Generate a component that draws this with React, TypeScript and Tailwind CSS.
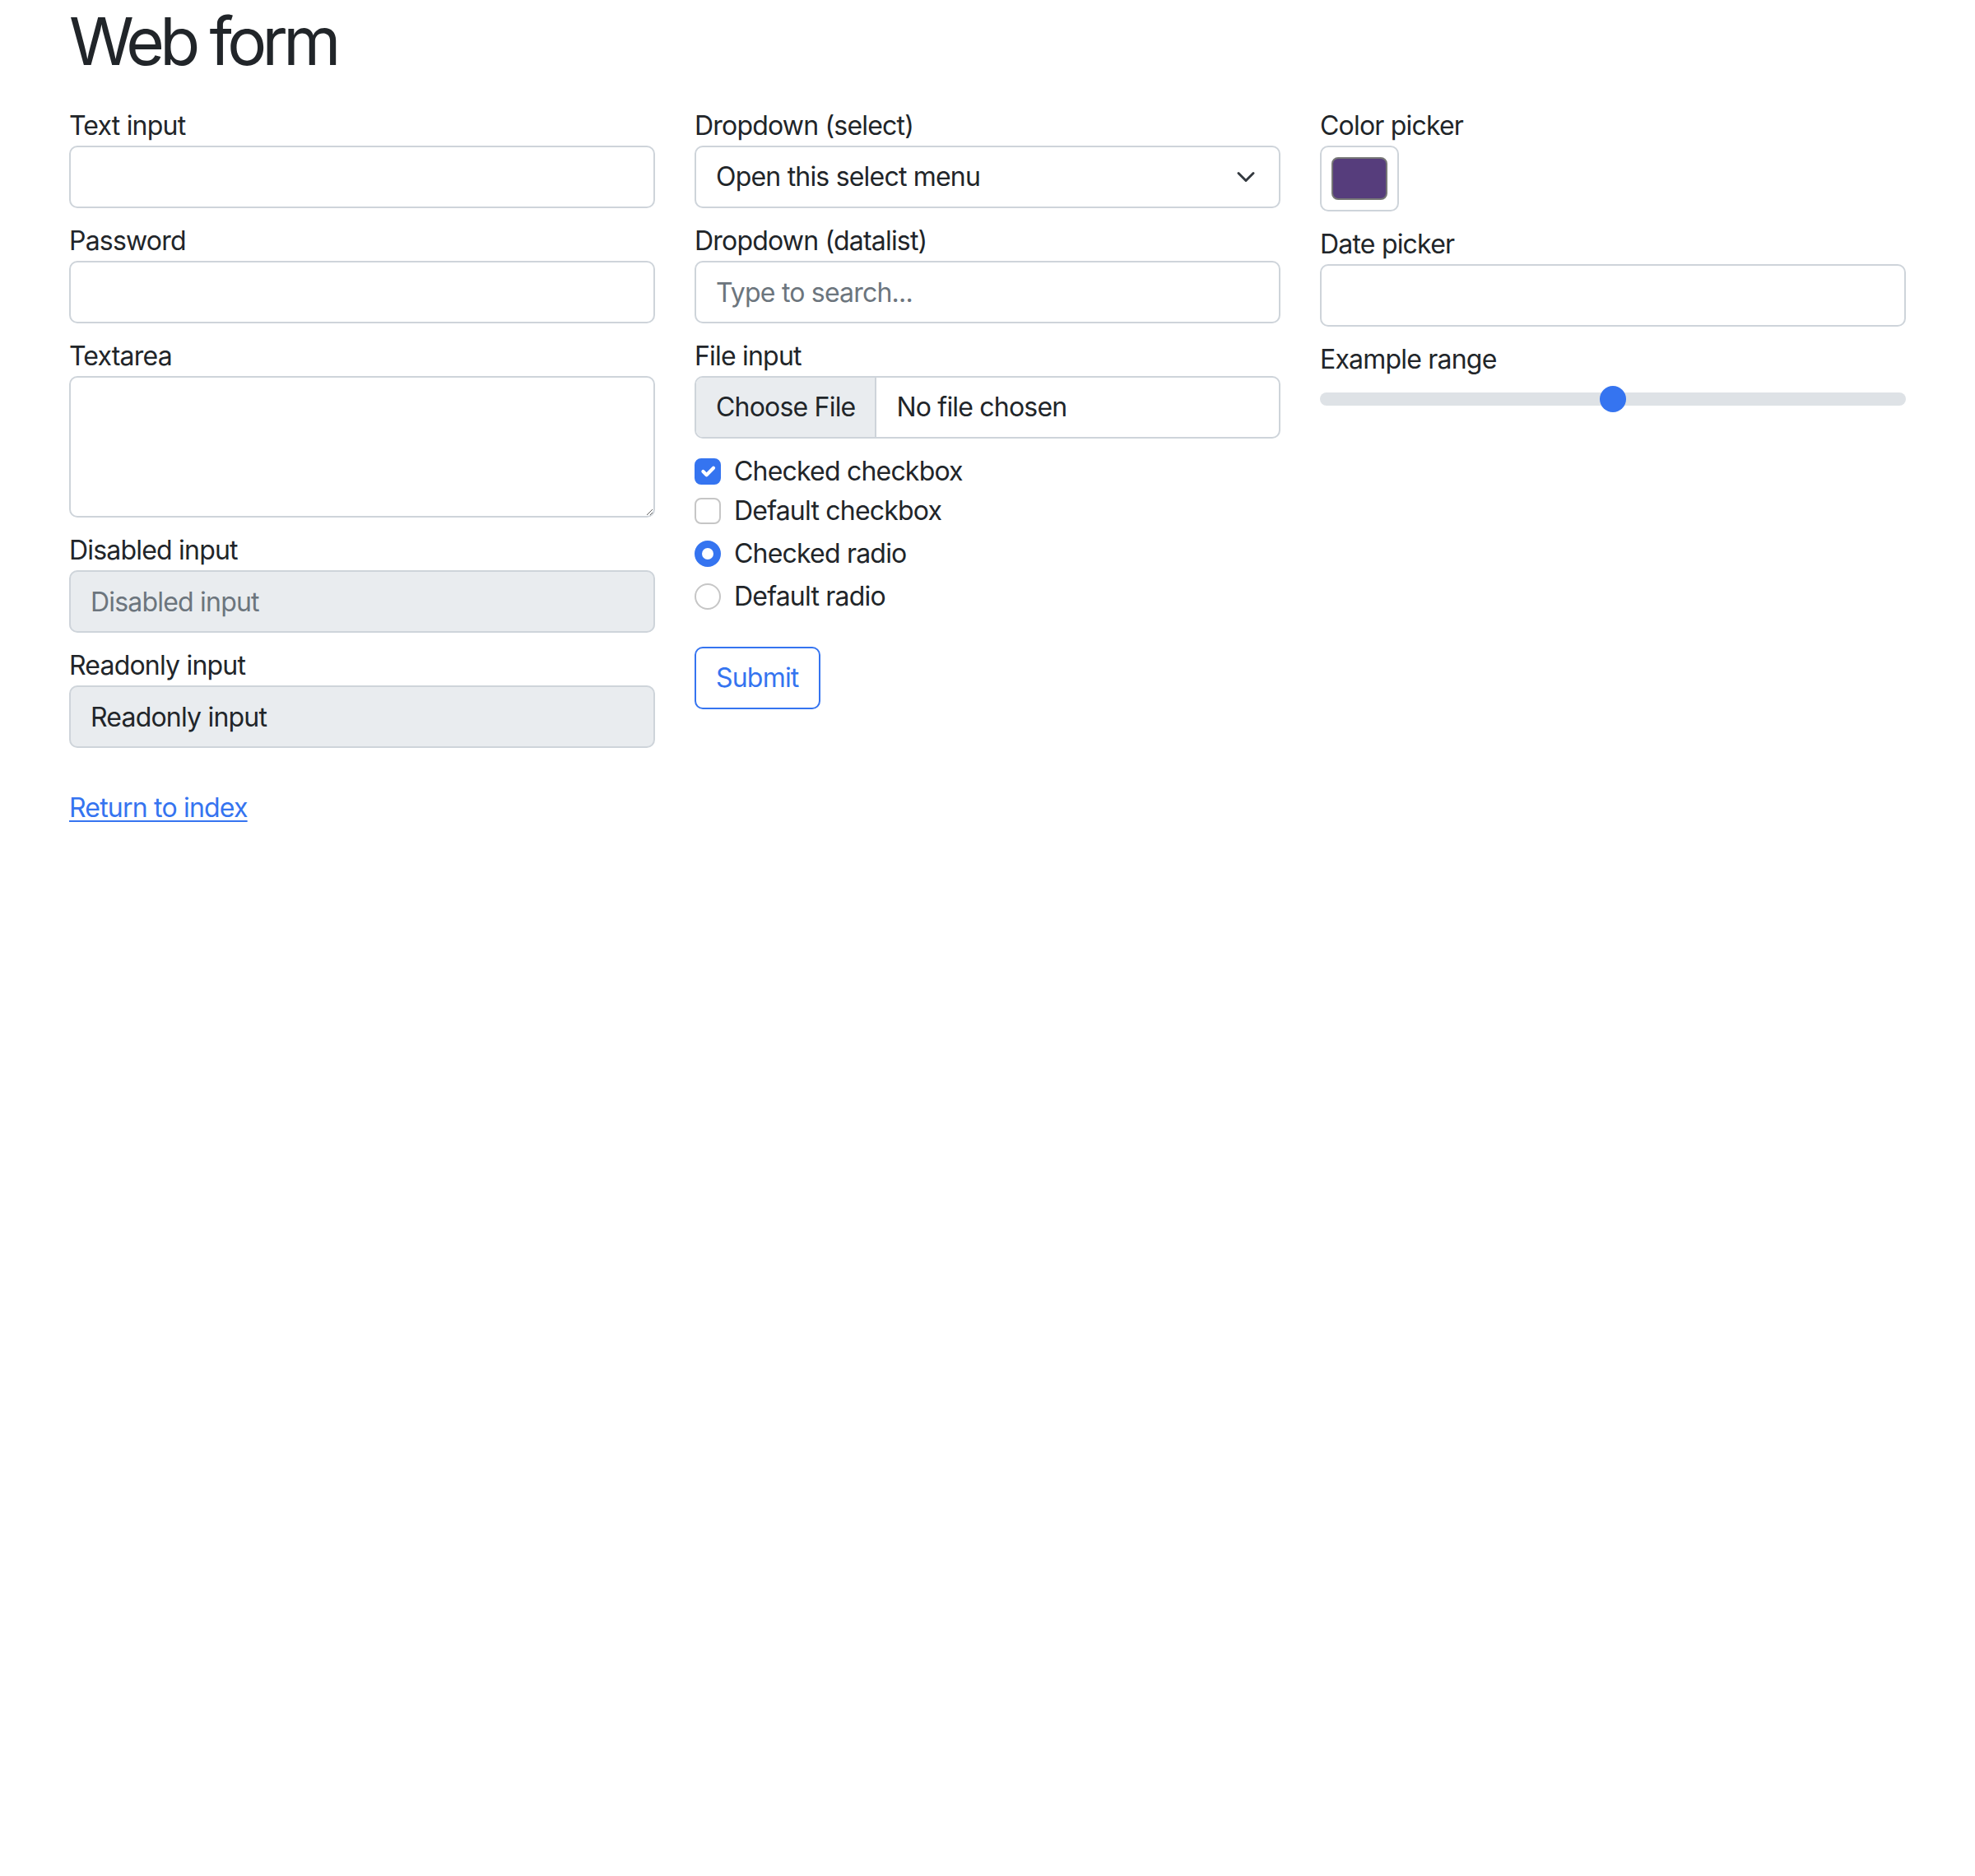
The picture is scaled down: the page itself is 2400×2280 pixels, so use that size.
import React from "react";

const inputBase =
	"block w-full h-[76px] border-2 border-[#ced4da] rounded-[10px] px-[24px] text-[32px] leading-[48px] text-[#212529] outline-none";

function Field({ label, children }: { label: string; children: React.ReactNode }) {
	return (
		<label className="block mb-[16px]">
			<span className="block h-[48px]">{label}</span>
			{children}
		</label>
	);
}

function CheckRow({
	label,
	kind,
	checked,
	last,
}: {
	label: string;
	kind: "checkbox" | "radio";
	checked?: boolean;
	last?: boolean;
}) {
	const box =
		kind === "checkbox"
			? checked
				? "rounded-[8px] bg-[#3574f0] border-2 border-[#3574f0]"
				: "rounded-[8px] bg-white border-2 border-[#c6c6c6]"
			: checked
				? "rounded-full bg-[#3574f0] border-2 border-[#3574f0]"
				: "rounded-full bg-white border-2 border-[#c6c6c6]";
	return (
		<div className={`flex items-start h-[48px] ${last ? "" : "mb-[4px]"}`}>
			<span className={`mt-[8px] w-[32px] h-[32px] shrink-0 flex items-center justify-center ${box}`}>
				{checked && kind === "checkbox" && (
					<svg viewBox="0 0 20 20" className="w-[28px] h-[28px]">
						<path
							d="m6 10 3 3 6-6"
							fill="none"
							stroke="#fff"
							strokeWidth="3"
							strokeLinecap="round"
							strokeLinejoin="round"
						/>
					</svg>
				)}
				{checked && kind === "radio" && <span className="w-[14px] h-[14px] rounded-full bg-white" />}
			</span>
			<span className="ml-[16px] leading-[48px]">{label}</span>
		</div>
	);
}

export default function App() {
	return (
		<div className="min-h-[2280px] bg-white text-[#212529] text-[32px] leading-[48px] tracking-[-0.025em] font-['Inter',sans-serif]">
			<div className="mx-auto w-[2280px] px-[24px]">
				<h1 className="text-[80px] leading-[96px] font-normal tracking-[-0.07em] pt-[2px] mb-[31px]">Web form</h1>

				<form className="grid grid-cols-3 gap-x-[48px] items-start" onSubmit={(e) => e.preventDefault()}>
					{/* left column */}
					<div>
						<Field label="Text input">
							<input type="text" className={inputBase} />
						</Field>
						<Field label="Password">
							<input type="password" className={inputBase} />
						</Field>
						<Field label="Textarea">
							<textarea
								rows={3}
								className="block w-full h-[172px] border-2 border-[#ced4da] rounded-[10px] px-[24px] py-[12px] text-[32px] leading-[48px] outline-none resize-y"
							/>
						</Field>
						<Field label="Disabled input">
							<input
								type="text"
								disabled
								placeholder="Disabled input"
								className={`${inputBase} bg-[#e9ecef] placeholder:text-[#6c757d]`}
							/>
						</Field>
						<Field label="Readonly input">
							<input
								type="text"
								readOnly
								defaultValue="Readonly input"
								className={`${inputBase} bg-[#e9ecef]`}
							/>
						</Field>
					</div>

					{/* middle column */}
					<div>
						<Field label="Dropdown (select)">
							<div className="flex items-center justify-between h-[76px] border-2 border-[#ced4da] rounded-[10px] pl-[24px] pr-[24px] bg-white">
								<span>Open this select menu</span>
								<span className="w-[32px] flex justify-center">
									<svg viewBox="0 0 16 16" className="w-[24px] h-[24px]">
										<path
											d="m2 5 6 6 6-6"
											fill="none"
											stroke="#343a40"
											strokeWidth="2"
											strokeLinecap="round"
											strokeLinejoin="round"
										/>
									</svg>
								</span>
							</div>
						</Field>
						<Field label="Dropdown (datalist)">
							<input type="text" placeholder="Type to search..." className={`${inputBase} placeholder:text-[#6c757d]`} />
						</Field>
						<Field label="File input">
							<div className="flex items-center h-[76px] border-2 border-[#ced4da] rounded-[10px] overflow-hidden">
								<span className="h-full flex items-center px-[24px] bg-[#e9ecef] border-r-2 border-[#ced4da]">
									Choose File
								</span>
								<span className="ml-[24px]">No file chosen</span>
							</div>
						</Field>

						<CheckRow kind="checkbox" label="Checked checkbox" checked last />
						<CheckRow kind="checkbox" label="Default checkbox" />
						<CheckRow kind="radio" label="Checked radio" checked />
						<CheckRow kind="radio" label="Default radio" />

						<button
							type="submit"
							className="mt-[33px] h-[76px] px-[24px] border-2 border-[#3574f0] rounded-[10px] text-[#3574f0] text-[32px] leading-[48px]"
						>
							Submit
						</button>
					</div>

					{/* right column */}
					<div>
						<Field label="Color picker">
							<div className="w-[96px] h-[80px] border-2 border-[#ced4da] rounded-[10px] p-[12px]">
								<div className="w-full h-full bg-[#563d7c] border-2 border-[#767676] rounded-[8px]" />
							</div>
						</Field>
						<Field label="Date picker">
							<input type="text" className={inputBase} />
						</Field>
						<div>
							<span className="block h-[48px]">Example range</span>
							<div className="relative h-[48px] flex items-center">
								<div className="w-full h-[16px] rounded-full bg-[#dee2e6]" />
								<div className="absolute top-[8px] left-[340px] w-[32px] h-[32px] rounded-full bg-[#3574f0]" />
							</div>
						</div>
					</div>
				</form>

				<div className="mt-[33px]">
					<a href="#" className="text-[#3574f0] underline decoration-2 underline-offset-[4px]">
						Return to index
					</a>
				</div>
			</div>
		</div>
	);
}
